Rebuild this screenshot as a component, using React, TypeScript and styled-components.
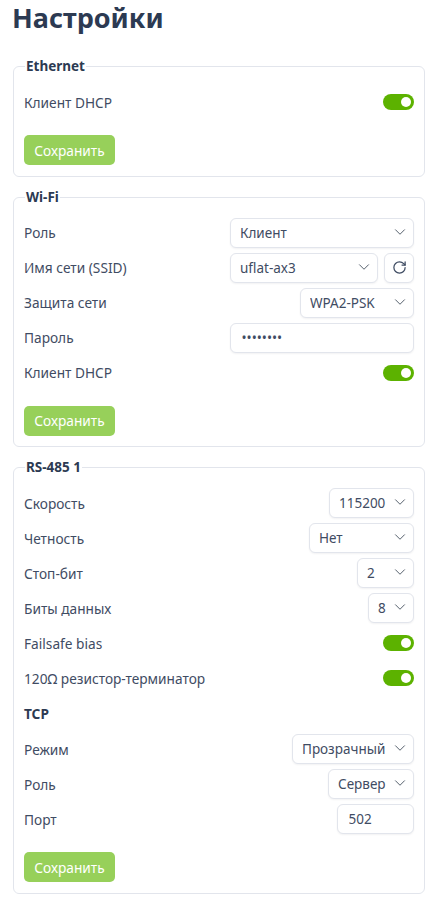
import React from 'react';
import styled, { createGlobalStyle } from 'styled-components';
import { ChevronDown, RotateCw } from 'lucide-react';

const GlobalStyle = createGlobalStyle`
    html, body {
        margin: 0;
        padding: 0;
        background: #ffffff;
    }
    body {
        font-family: "Noto Sans", "Open Sans", sans-serif;
        color: #334155;
    }
`;

const Page = styled.div`
    padding: 0 5px 0 13px;
    display: flex;
    flex-direction: column;
    gap: 11px;
`;

const Title = styled.h1`
    margin: 0 0 10px -1px;
    font-size: 27px;
    line-height: 36px;
    font-weight: 700;
    color: #2c3a52;
`;

const Card = styled.fieldset`
    margin: 0;
    padding: 11px 10px 10.5px;
    border: 1px solid #e2e5ec;
    border-radius: 6px;
    min-width: 0;
    display: flex;
    flex-direction: column;
`;

const Legend = styled.legend`
    margin-left: 1px;
    padding: 0 1px;
    font-size: 13.5px;
    line-height: 19px;
    font-weight: 700;
    color: #2c3a52;
`;

const Row = styled.div`
    display: flex;
    align-items: center;
    justify-content: space-between;
    height: 30px;
    margin-bottom: 5px;
`;

const Label = styled.span`
    font-size: 13.7px;
    color: #3f4c63;
`;

const Group = styled.div`
    display: flex;
    gap: 6px;
`;

const SelectBox = styled.div<{ $width: number }>`
    position: relative;
    width: ${p => p.$width}px;
    height: 30px;

    svg {
        position: absolute;
        right: 5px;
        top: 5px;
        color: #4b5563;
        pointer-events: none;
    }
`;

const SelectField = styled.select`
    appearance: none;
    width: 100%;
    height: 100%;
    padding: 0 20px 0 9px;
    border: 1px solid #e2e5ec;
    border-radius: 6px;
    background: #ffffff;
    font-family: inherit;
    font-size: 13.5px;
    color: #3f4c63;
    box-shadow: 0 1px 2px rgba(30, 41, 59, 0.06);
`;

const TextField = styled.input<{ $width: number }>`
    box-sizing: border-box;
    width: ${p => p.$width}px;
    height: 30px;
    padding: 0 10.5px;
    border: 1px solid #e2e5ec;
    border-radius: 6px;
    background: #ffffff;
    font-family: inherit;
    font-size: 13.5px;
    color: #3f4c63;
    box-shadow: 0 1px 2px rgba(30, 41, 59, 0.06);
`;

const IconButton = styled.button`
    width: 30px;
    height: 30px;
    padding: 0;
    display: flex;
    align-items: center;
    justify-content: center;
    border: 1px solid #e2e5ec;
    border-radius: 6px;
    background: #ffffff;
    color: #3f4c63;
    box-shadow: 0 1px 2px rgba(30, 41, 59, 0.06);
`;

const Toggle = styled.span`
    position: relative;
    display: block;
    width: 31px;
    height: 16px;
    border-radius: 8px;
    background: #5cb200;

    &::after {
        content: '';
        position: absolute;
        right: 3px;
        top: 3px;
        width: 10px;
        height: 10px;
        border-radius: 50%;
        background: #ffffff;
    }
`;

const Subheading = styled.div`
    height: 31px;
    margin-bottom: 5px;
    line-height: 31px;
    font-size: 13.7px;
    font-weight: 700;
    color: #2c3a52;
`;

const SaveButton = styled.button`
    align-self: flex-start;
    width: 91px;
    height: 30px;
    margin-top: 13px;
    padding: 0;
    border: none;
    border-radius: 5px;
    background: #97d05a;
    color: #ffffff;
    font-family: inherit;
    font-size: 13.7px;
`;

const Select: React.FC<{ value: string; width: number }> = ({ value, width }) => (
    <SelectBox $width={width}>
        <SelectField defaultValue={value}>
            <option>{value}</option>
        </SelectField>
        <ChevronDown size={18} strokeWidth={1.25} />
    </SelectBox>
);

const Switch: React.FC<{ label: string }> = ({ label }) => (
    <Row>
        <Label>{label}</Label>
        <Toggle />
    </Row>
);

export default function App() {
    return (
        <>
            <GlobalStyle />
            <Page>
                <Title>Настройки</Title>
                <Card>
                    <Legend>Ethernet</Legend>
                    <Switch label="Клиент DHCP" />
                    <SaveButton>Сохранить</SaveButton>
                </Card>
                <Card>
                    <Legend>Wi-Fi</Legend>
                    <Row>
                        <Label>Роль</Label>
                        <Select value="Клиент" width={184} />
                    </Row>
                    <Row>
                        <Label>Имя сети (SSID)</Label>
                        <Group>
                            <Select value="uflat-ax3" width={148} />
                            <IconButton><RotateCw size={15} /></IconButton>
                        </Group>
                    </Row>
                    <Row>
                        <Label>Защита сети</Label>
                        <Select value="WPA2-PSK" width={114} />
                    </Row>
                    <Row>
                        <Label>Пароль</Label>
                        <TextField type="password" defaultValue="password" $width={184} />
                    </Row>
                    <Switch label="Клиент DHCP" />
                    <SaveButton>Сохранить</SaveButton>
                </Card>
                <Card>
                    <Legend>RS-485 1</Legend>
                    <Row>
                        <Label>Скорость</Label>
                        <Select value="115200" width={85} />
                    </Row>
                    <Row>
                        <Label>Четность</Label>
                        <Select value="Нет" width={105} />
                    </Row>
                    <Row>
                        <Label>Стоп-бит</Label>
                        <Select value="2" width={57} />
                    </Row>
                    <Row>
                        <Label>Биты данных</Label>
                        <Select value="8" width={46} />
                    </Row>
                    <Switch label="Failsafe bias" />
                    <Switch label="120Ω резистор-терминатор" />
                    <Subheading>TCP</Subheading>
                    <Row>
                        <Label>Режим</Label>
                        <Select value="Прозрачный" width={122} />
                    </Row>
                    <Row>
                        <Label>Роль</Label>
                        <Select value="Сервер" width={86} />
                    </Row>
                    <Row>
                        <Label>Порт</Label>
                        <TextField defaultValue="502" $width={77} />
                    </Row>
                    <SaveButton>Сохранить</SaveButton>
                </Card>
            </Page>
        </>
    );
}
